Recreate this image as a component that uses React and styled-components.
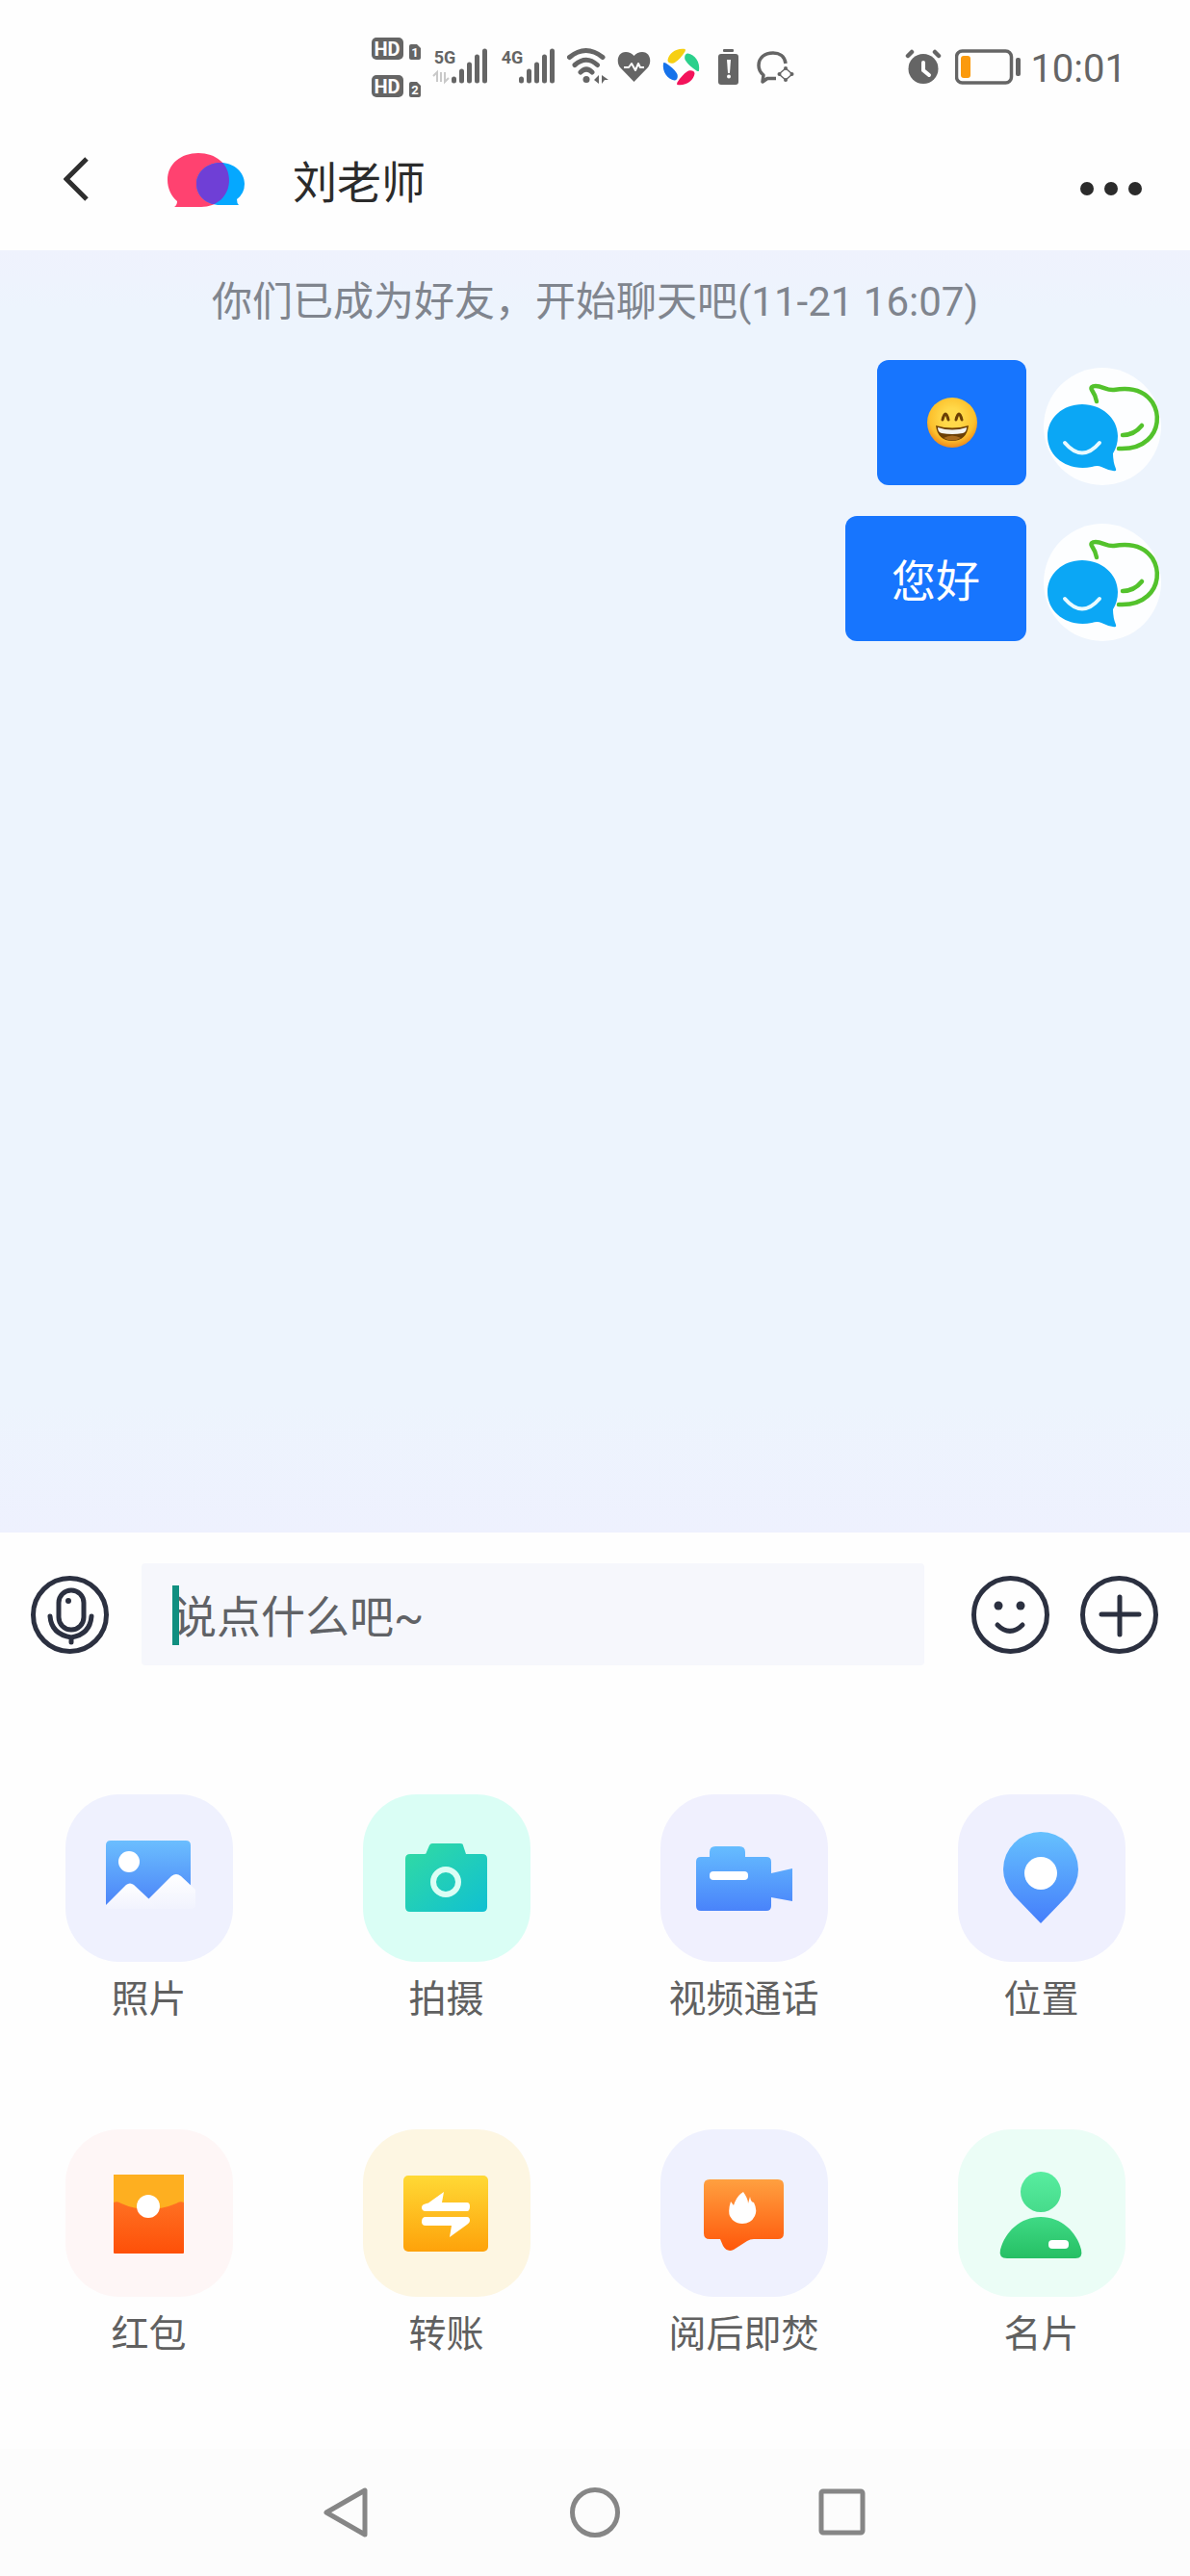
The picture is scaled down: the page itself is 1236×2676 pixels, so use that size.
import React from 'react'
import styled, { createGlobalStyle } from 'styled-components'

const actions = [
    { id: "photo", title: "照片", bg: "#EFF1FE", icon: <PhotoIcon /> },
    { id: "camera", title: "拍摄", bg: "#DAFEF5", icon: <CameraIcon /> },
    { id: "video", title: "视频通话", bg: "#F0F0FE", icon: <VideoIcon /> },
    { id: "location", title: "位置", bg: "#EFF0FE", icon: <PinIcon /> },
    { id: "packet", title: "红包", bg: "#FEF6F6", icon: <PacketIcon /> },
    { id: "transfer", title: "转账", bg: "#FDF6E2", icon: <TransferIcon /> },
    { id: "burn", title: "阅后即焚", bg: "#EFF1FE", icon: <BurnIcon /> },
    { id: "card", title: "名片", bg: "#EBFDF6", icon: <CardIcon /> },
]

function App() {
    return (
        <>
            <GlobalStyle />
            <Phone>
                <StatusBar />
                <Header>
                    <IconButton aria-label="返回"><BackIcon /></IconButton>
                    <Logo />
                    <Title>刘老师</Title>
                    <IconButton aria-label="更多"><MoreIcon /></IconButton>
                </Header>
                <Chat>
                    <Notice>你们已成为好友，开始聊天吧(11-21 16:07)</Notice>
                    <Message>
                        <Bubble><Grin /></Bubble>
                        <Avatar><AvatarIcon /></Avatar>
                    </Message>
                    <Message>
                        <Bubble>您好</Bubble>
                        <Avatar><AvatarIcon /></Avatar>
                    </Message>
                </Chat>
                <Composer>
                    <IconButton aria-label="语音"><MicIcon /></IconButton>
                    <Field>
                        <Input type="text" aria-label="消息" placeholder="说点什么吧~" />
                        <Caret />
                    </Field>
                    <Tools>
                        <IconButton aria-label="表情"><SmileIcon /></IconButton>
                        <IconButton aria-label="添加"><PlusIcon /></IconButton>
                    </Tools>
                </Composer>
                <Panel>
                    {
                        actions.map((a) => (
                            <Action key={a.id}>
                                <Tile $bg={a.bg}>{a.icon}</Tile>
                                {a.title}
                            </Action>
                        ))
                    }
                </Panel>
                <NavBar>
                    <IconButton aria-label="后退">
                        <NavIcon><path d="M45 4v46L5 27z" /></NavIcon>
                    </IconButton>
                    <IconButton aria-label="主页">
                        <NavIcon><circle cx="26" cy="27" r="23.500" /></NavIcon>
                    </IconButton>
                    <IconButton aria-label="最近任务">
                        <NavIcon><rect x="3" y="5" width="43" height="43" rx="2" /></NavIcon>
                    </IconButton>
                </NavBar>
            </Phone>
        </>
    )
}

export default App

function StatusBar() {
    return (
        <StyledStatus>
            <StatusGroup>
                <svg width="56" height="68" viewBox="0 0 56 68">
                    <HdBadge y={3} sim="1" />
                    <HdBadge y={42} sim="2" />
                </svg>
                <Signal label="5G" arrows />
                <Signal label="4G" />
                <svg width="44" height="68" viewBox="0 0 44 68" fill="none" stroke="#656565" strokeWidth="5" strokeLinecap="round">
                    <path d="M2.500 23.500Q19.500 9.500 37 23.500M8 31.500Q20 21 31.500 31.500M14 39Q20 33 26 39" />
                    <circle cx="20" cy="46.500" r="3.500" fill="#656565" stroke="none" />
                    <path d="M33 42v9l-5-4zM36 51v-9l7 5h-4z" fill="#656565" stroke="none" />
                </svg>
                <svg width="38" height="68" viewBox="0 0 38 68">
                    <path d="M17.500 49L3 34C-1 29 0 18 9 18Q14 18 17.500 22Q21 18 26 18C35 18 36 29 32 34z" fill="#656565" />
                    <path d="M7 34h5l3-4 4 7 3-7 2 4h4" fill="none" stroke="#fff" strokeWidth="2" strokeLinejoin="round" />
                </svg>
                <svg width="42" height="68" viewBox="0 0 42 68">
                    {
                        ["#F6CF12", "#2BD08C", "#F3135A", "#1672EA"].map((color, i) => (
                            <path
                                key={color}
                                fill={color}
                                transform={`translate(20.500 33.500) rotate(${i * 90})`}
                                d="M4-18.500C-5-20-13-14-14-7C-14-3-8-3-6-5C-3-7 1-11 4-16Q5-18 4-18.500z"
                            />
                        ))
                    }
                </svg>
                <svg width="40" height="68" viewBox="0 0 40 68">
                    <rect x="14" y="15" width="11" height="3" rx="1" fill="#656565" />
                    <rect x="9" y="20" width="21" height="32" rx="3" fill="#656565" />
                    <path d="M18 26h4l-1 14h-2z" fill="#fff" />
                    <circle cx="20" cy="43.500" r="2" fill="#fff" />
                </svg>
                <svg width="42" height="68" viewBox="0 0 42 68" fill="none" stroke="#656565" strokeLinejoin="round">
                    <path d="M31 30C30 22 24 19 18 19C9 19 3 24 3 32Q3 38 8 42L7 49L12 45.500H21" strokeWidth="3.500" />
                    <path d="M31 35L38 41L31 47L24 41z" strokeWidth="1.500" />
                    <g fill="#656565" stroke="none">
                        <circle cx="31" cy="35" r="2" />
                        <circle cx="37.500" cy="41" r="2" />
                        <circle cx="31" cy="47" r="2" />
                        <circle cx="24.500" cy="41" r="2" />
                    </g>
                </svg>
            </StatusGroup>
            <StatusGroup>
                <svg width="44" height="68" viewBox="0 0 44 68" strokeLinecap="round" fill="none">
                    <circle cx="19" cy="35.500" r="15.500" fill="#656565" />
                    <path d="M3 22l4-4M31 18l4 4" stroke="#656565" strokeWidth="4.500" />
                    <path d="M19 29v8l6 5" stroke="#fff" strokeWidth="4" />
                </svg>
                <svg width="70" height="68" viewBox="0 0 70 68">
                    <rect x="1.500" y="17" width="57" height="33" rx="6" fill="none" stroke="#656565" strokeWidth="3.500" />
                    <rect x="6" y="22" width="10" height="23" rx="3" fill="#FB9A0D" />
                    <rect x="63" y="24" width="5" height="19" rx="2" fill="#656565" />
                </svg>
                <Clock>10:01</Clock>
            </StatusGroup>
        </StyledStatus>
    )
}

function HdBadge({ y, sim }) {
    return (
        <g transform={`translate(0 ${y})`}>
            <rect x="1" width="33" height="23" rx="5" fill="#656565" />
            <BadgeText x="17" y="19" fontSize="20">HD</BadgeText>
            <path d="M40 9q0-2 2-2h6l4 4v10q0 2-2 2h-8q-2 0-2-2z" fill="#656565" />
            <BadgeText x="46" y="20" fontSize="13">{sim}</BadgeText>
        </g>
    )
}

function Signal({ label, arrows }) {
    return (
        <svg width="62" height="68" viewBox="0 0 62 68">
            <BadgeText x="13" y="30" fontSize="18" $dark>{label}</BadgeText>
            {arrows && <path d="M1 43l4-4v10M9 39v10M13 39v10l4-4" fill="none" stroke="#C9C9C9" strokeWidth="2" />}
            <path d="M22.500 46v2M30.500 38v10M38.500 31v17M46.500 23v25M54.500 17v31" stroke="#656565" strokeWidth="5" strokeLinecap="round" />
        </svg>
    )
}

function BackIcon() {
    return (
        <svg width="26" height="50" viewBox="0 0 26 50" fill="none" stroke="#2E2E2E" strokeWidth="5">
            <path d="M24 3L3 24L24 45" />
        </svg>
    )
}

function MoreIcon() {
    return (
        <svg width="66" height="40" viewBox="0 0 66 40" fill="#2B2B2B">
            <circle cx="8" cy="29" r="7" />
            <circle cx="33" cy="29" r="7" />
            <circle cx="58" cy="29" r="7" />
        </svg>
    )
}

function Logo() {
    const pink = "M32 1C50 1 64 12 64 29C64 46 51 57 35 57H7Q10 55 10 51C4 46 0 38 0 29C0 12 14 1 32 1z"
    const blue = "M55 11C69 11 80 21 80 33Q80 43 72 49Q72 53 74 55H55C40 55 30 45 30 33C30 21 41 11 55 11z"
    return (
        <svg width="80" height="58" viewBox="0 0 80 58">
            <clipPath id="logo-overlap"><path d={pink} /></clipPath>
            <path d={pink} fill="#FF4270" />
            <path d={blue} fill="#05A8FF" />
            <path d={blue} fill="#6F3FD6" clipPath="url(#logo-overlap)" />
        </svg>
    )
}

function Grin() {
    return (
        <svg width="59" height="54" viewBox="0 0 59 54" role="img" aria-label="笑脸">
            <defs>
                <radialGradient id="grin" cx="0.500" cy="0.400" r="0.600">
                    <stop offset="0.300" stopColor="#FFD94A" />
                    <stop offset="0.750" stopColor="#FCC02C" />
                    <stop offset="1" stopColor="#EE8A1B" />
                </radialGradient>
            </defs>
            <circle cx="30" cy="28" r="26" fill="url(#grin)" />
            <path d="M20 25q3-12 6 0M34 25q3-12 6 0" fill="none" stroke="#6B3F05" strokeWidth="3" strokeLinecap="round" />
            <path d="M13 31Q30 36 47 31Q45 47 30 47Q15 47 13 31z" fill="#6B3F05" />
            <path d="M15 33Q30 38 45 33Q45 38 41 39Q30 41 19 39Q15 38 15 33z" fill="#F4F4F0" />
            <path d="M21 44Q30 39 39 44Q30 49 21 44z" fill="#A86A1C" />
        </svg>
    )
}

function AvatarIcon() {
    return (
        <svg width="122" height="122" viewBox="0 0 122 122" fill="none" strokeLinecap="round">
            <path d="M55 35Q54 29 50 23Q48 19 54 19C61 19 66 24 73 23C90 20 104 23 113 36C121 49 119 65 108 75Q97 85 78 84" stroke="#53C22C" strokeWidth="4.500" />
            <path d="M82 70Q94 70 102 60" stroke="#53C22C" strokeWidth="4.500" />
            <path d="M40 38C60 38 77 52 77 71Q77 81 72 89Q72 98 75 105Q76 108 72 107Q66 106 60 103Q56 101 50 103C24 108 4 92 4 71C4 52 20 38 40 38z" fill="#0BA7F5" />
            <path d="M22 78Q40 99 58 78" stroke="#E8FAFF" strokeWidth="4" />
        </svg>
    )
}

function MicIcon() {
    return (
        <RoundIcon>
            <rect x="29" y="15" width="26" height="41" rx="13" />
            <path d="M20 42C21 56 30 62 42 64C54 62 62 55 63 42M42 64v5" />
            <circle cx="39" cy="26" r="3" fill="#2B3040" stroke="none" />
        </RoundIcon>
    )
}

function SmileIcon() {
    return (
        <RoundIcon>
            <circle cx="28" cy="31" r="4.500" fill="#2B3040" stroke="none" />
            <circle cx="51" cy="31" r="4.500" fill="#2B3040" stroke="none" />
            <path d="M27 51Q40 64 53 51" />
        </RoundIcon>
    )
}

function PlusIcon() {
    return (
        <RoundIcon>
            <path d="M41 22v39M22 40h39" />
        </RoundIcon>
    )
}

function RoundIcon({ children }) {
    return (
        <svg width="81" height="81" viewBox="0 0 81 81" fill="none" stroke="#2B3040" strokeWidth="5" strokeLinecap="round">
            <circle cx="40.500" cy="40.500" r="38" />
            {children}
        </svg>
    )
}

function Gradient({ id, from, to, slanted }) {
    return (
        <linearGradient id={id} x1="0" y1="0" x2={slanted ? 1 : 0} y2="1">
            <stop offset="0" stopColor={from} />
            <stop offset="1" stopColor={to} />
        </linearGradient>
    )
}

function PhotoIcon() {
    return (
        <TileIcon>
            <Gradient id="photo" from="#6BBEFE" to="#4C84F8" />
            <Gradient id="snow" from="#FFFFFF" to="#F1F3FE" />
            <path d="M43 53q0-5 5-5h78q5 0 5 5v62H43z" fill="url(#photo)" />
            <circle cx="67" cy="70" r="11" fill="#fff" />
            <path d="M87 109L111 85Q116 81 121 85L136 99V115Q136 119 131 119H88z" fill="url(#snow)" />
            <path d="M43 115L64 94Q68 91 72 94L88 109L97 119H43z" fill="url(#snow)" />
        </TileIcon>
    )
}

function CameraIcon() {
    return (
        <TileIcon>
            <Gradient id="camera" from="#32DBA2" to="#10C0D2" slanted />
            <path d="M67 60L70 53Q71 51 73 51H102Q105 51 105 53L108 62H125Q130 62 130 67V117Q130 122 125 122H50Q45 122 45 117V67Q45 62 50 62H65Q67 62 67 60z" fill="url(#camera)" />
            <circle cx="87" cy="91" r="13" fill="none" stroke="#DAFEF5" strokeWidth="6" />
        </TileIcon>
    )
}

function VideoIcon() {
    return (
        <TileIcon>
            <Gradient id="video" from="#66BDFF" to="#4983FA" />
            <path d="M52 65V60Q52 54 58 54H83Q89 54 89 60V65H111Q116 65 116 70V82L138 77V111L116 107V116Q116 121 111 121H43Q38 121 38 116V70Q38 65 43 65z" fill="url(#video)" />
            <rect x="52" y="80" width="40" height="9" rx="4" fill="#fff" />
        </TileIcon>
    )
}

function PinIcon() {
    return (
        <TileIcon>
            <Gradient id="pin" from="#66C1FE" to="#457EFB" />
            <path d="M87 134L59 105Q48 92 48 78A39 39 0 0 1 126 78Q126 92 115 105z" fill="url(#pin)" />
            <circle cx="87" cy="82" r="17" fill="#fff" />
        </TileIcon>
    )
}

function PacketIcon() {
    return (
        <TileIcon>
            <Gradient id="packet" from="#FF8130" to="#FE5008" />
            <rect x="51" y="47" width="73" height="82" rx="1" fill="url(#packet)" />
            <path d="M51 47H124V76Q120 74 116 77Q102 83 87 83Q72 83 59 77Q55 74 51 76z" fill="#FEAF20" />
            <circle cx="87" cy="80" r="12" fill="#fff" />
        </TileIcon>
    )
}

function TransferIcon() {
    return (
        <TileIcon>
            <Gradient id="transfer" from="#FFD935" to="#FEA20A" />
            <rect x="43" y="48" width="88" height="79" rx="5" fill="url(#transfer)" />
            <path d="M85 65L83 76H109Q112 76 112 80Q112 85 109 85H66Q62 85 62 81Q62 78 67 77Q69 77 71 75z" fill="#fff" />
            <path d="M91 112L93 100H66Q62 100 62 96Q62 91 66 91H109Q112 91 112 95Q112 97 109 99z" fill="#fff" />
        </TileIcon>
    )
}

function BurnIcon() {
    return (
        <TileIcon>
            <Gradient id="burn" from="#FFA040" to="#FF570A" />
            <path d="M52 52H123Q129 52 129 58V108Q129 114 123 114H98Q94 114 91 116L77 125Q70 128 66 121L63 114H52Q46 114 46 108V58Q46 52 52 52z" fill="url(#burn)" />
            <path d="M87 65Q92 72 92 77L94 70Q95 76 98 76Q102 84 99 90Q95 98 86 98Q77 98 73 90Q71 84 74 75L77 79Q80 69 87 65z" fill="#fff" />
        </TileIcon>
    )
}

function CardIcon() {
    return (
        <TileIcon>
            <Gradient id="card-head" from="#58EDA0" to="#46DB8B" />
            <Gradient id="card-body" from="#3FDA85" to="#26BF64" />
            <circle cx="87" cy="65" r="21" fill="url(#card-head)" />
            <path d="M87 91C108 91 124 106 129 125Q131 134 123 134H52Q43 134 45 125C50 106 66 91 87 91z" fill="url(#card-body)" />
            <rect x="95" y="115" width="21" height="9" rx="4" fill="#fff" />
        </TileIcon>
    )
}

function TileIcon({ children }) {
    return <svg width="174" height="174" viewBox="1 0 174 174">{children}</svg>
}

function NavIcon({ children }) {
    return (
        <svg width="52" height="54" viewBox="0 0 52 54" fill="none" stroke="#868686" strokeWidth="5" strokeLinejoin="round">
            {children}
        </svg>
    )
}

const GlobalStyle = createGlobalStyle`
    * {
        box-sizing: border-box;
    }
    body {
        margin: 0;
        background: #fff;
        font-family: Roboto, "Noto Sans CJK SC", sans-serif;
    }
    svg {
        display: block;
        flex-shrink: 0;
    }
`

const Phone = styled.div`
    display: flex;
    flex-direction: column;
    min-height: 100vh;
    background: #fefefe;
`

const StyledStatus = styled.div`
    display: flex;
    justify-content: flex-end;
    gap: 113px;
    padding: 36px 66px 10px 0;
`

const StatusGroup = styled.div`
    display: flex;
    align-items: center;
    gap: 8px;
`

const Clock = styled.time`
    padding-top: 4px;
    color: #656565;
    font-size: 40px;
    line-height: 64px;
`

const BadgeText = styled.text`
    fill: ${props => props.$dark ? "#656565" : "#fff"};
    font-family: Roboto, sans-serif;
    font-weight: bold;
    text-anchor: middle;
`

const IconButton = styled.button`
    padding: 0;
    border: none;
    background: none;
    cursor: pointer;
`

const Header = styled.header`
    display: flex;
    align-items: center;
    height: 146px;
    padding: 0 49px 0 66px;
    ${IconButton}:first-child {
        margin-right: 82px;
    }
`

const Title = styled.h1`
    flex: 1;
    margin: 0 0 0 50px;
    padding-top: 6px;
    color: #2B2B2B;
    font-size: 46px;
    font-weight: 400;
    line-height: 60px;
`

const Chat = styled.main`
    display: flex;
    flex: 1;
    flex-direction: column;
    gap: 32px;
    padding: 26px 30px 32px;
    background: linear-gradient(#EFF2FD, #EDF4FD 60px, #EDF4FD 90%, #EEF1FE);
`

const Notice = styled.p`
    margin: 0;
    color: #80858E;
    font-size: 42px;
    line-height: 56px;
    text-align: center;
`

const Message = styled.div`
    display: flex;
    align-items: flex-end;
    justify-content: flex-end;
    gap: 18px;
`

const Bubble = styled.div`
    display: flex;
    align-items: center;
    height: 130px;
    padding: 0 48px 2px;
    border-radius: 12px;
    background: #1775FE;
    color: #fff;
    font-size: 46px;
`

const Avatar = styled.div`
    width: 122px;
    height: 122px;
    border-radius: 50%;
    background: #fdfeff;
`

const Composer = styled.div`
    display: flex;
    align-items: center;
    gap: 34px;
    padding: 32px 33px 34px 32px;
`

const Field = styled.div`
    position: relative;
    flex: 1;
    min-width: 0;
`

const Input = styled.input`
    display: block;
    width: 100%;
    height: 106px;
    padding: 6px 32px 0;
    border: none;
    border-radius: 4px;
    outline: none;
    background: #F6F7FC;
    color: #2B2B2B;
    font-family: inherit;
    font-size: 46px;
    &::placeholder {
        color: #606266;
        opacity: 1;
    }
`

const Caret = styled.span`
    position: absolute;
    top: 23px;
    left: 32px;
    width: 7px;
    height: 62px;
    background: #108F80;
`

const Tools = styled.div`
    display: flex;
    gap: 32px;
    margin-left: 15px;
`

const Panel = styled.div`
    display: grid;
    grid-template-columns: repeat(4, 1fr);
    row-gap: 108px;
    padding: 100px 0 92px;
`

const Action = styled.button`
    display: flex;
    flex-direction: column;
    align-items: center;
    gap: 12px;
    padding: 0;
    border: none;
    background: none;
    color: #606060;
    font-family: inherit;
    font-size: 39px;
    line-height: 54px;
    cursor: pointer;
`

const Tile = styled.span`
    width: 174px;
    height: 174px;
    border-radius: 56px;
    background: ${props => props.$bg};
`

const NavBar = styled.nav`
    display: flex;
    align-items: center;
    justify-content: space-between;
    height: 132px;
    padding: 0 27%;
    background: #fcfcfc;
`
